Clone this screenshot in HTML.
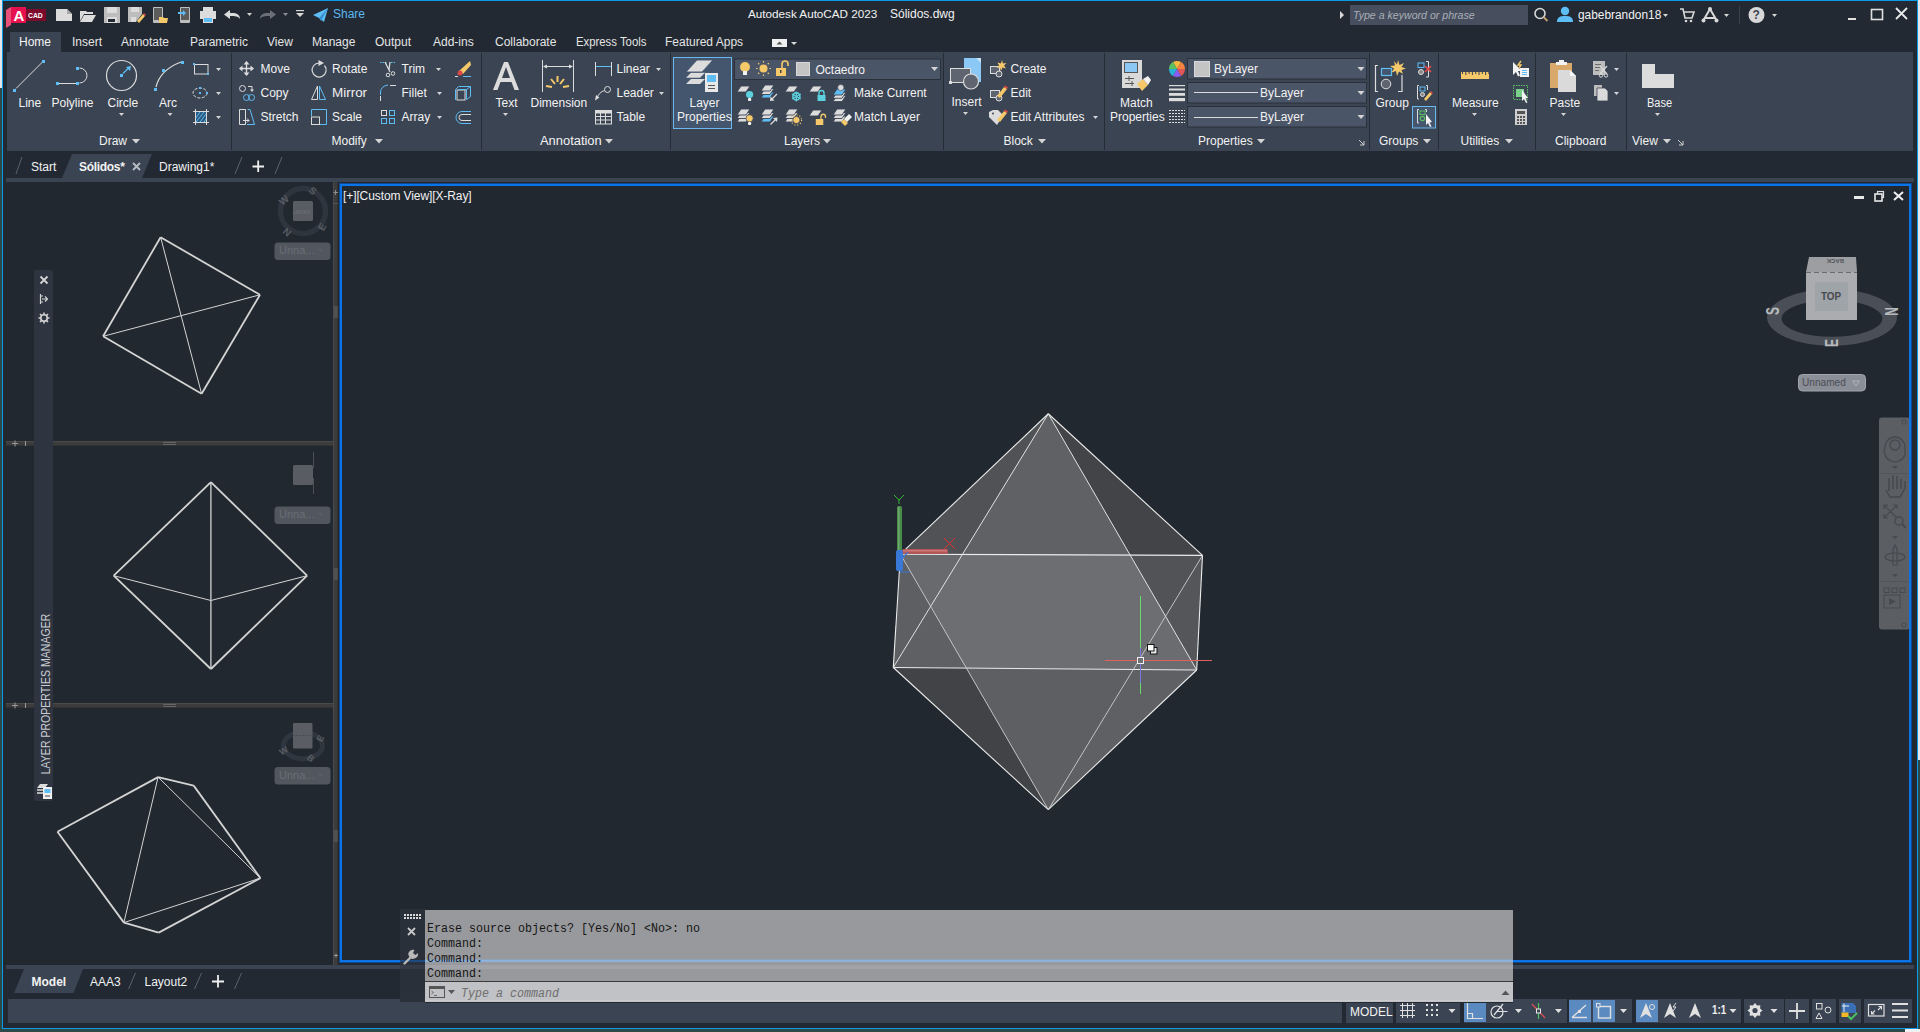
<!DOCTYPE html>
<html><head><meta charset="utf-8"><style>
html,body{margin:0;padding:0;width:1920px;height:1032px;overflow:hidden;background:#2d4a4a;position:relative;}
.t{position:absolute;white-space:pre;line-height:1;}
.r{position:absolute;}
.s{position:absolute;overflow:visible;}
</style></head><body>
<div class="r" style="left:0px;top:0px;width:2px;height:88px;background:#e4e6e9;"></div><div class="r" style="left:1918px;top:0px;width:2px;height:760px;background:#e4e6e9;"></div><div class="r" style="left:1905px;top:1029px;width:15px;height:3px;background:#f0f0f0;"></div><div class="r" style="left:2px;top:0px;width:1916px;height:1029px;background:#0b9ae4;"></div><div class="r" style="left:3px;top:1px;width:1914px;height:1027px;background:#222933;"></div><svg class="s" style="left:0px;top:0px;" width="1920" height="60" viewBox="0 0 1920 60"><polygon points="6,10 11,7 11,25 6,28" fill="#e8507a"/><rect x="11" y="7" width="15" height="16" fill="#e5114f"/><rect x="26" y="9" width="20" height="12" fill="#7c0a2a"/><path d="M56,9 H67 L72,14 V21 H56 Z" fill="#dcdcdc"/><path d="M67,9 V14 H72" fill="#a8a8a8"/><path d="M80,11 H86 L87,12 H93 V14 H84 L80,21 Z" fill="#dcdcdc"/><path d="M84,15 H96 L92,22 H80 Z" fill="#dcdcdc"/><path d="M104,7 H120 V23 H104 Z" fill="#bdbdbd"/><rect x="107" y="7" width="10" height="6" fill="#dcdcdc"/><rect x="107" y="17" width="10" height="6" fill="#dcdcdc"/><rect x="108" y="19" width="7" height="3" fill="#222933"/><path d="M128,7 H142 V14 L136,22 H128 Z" fill="#bdbdbd"/><rect x="131" y="7" width="8" height="5" fill="#dcdcdc"/><rect x="131" y="17" width="5" height="5" fill="#dcdcdc"/><path d="M137,21 L143,14 L145,16 L139,23 Z" fill="#f5c96a"/><path d="M143,14 L144,13 L146,15 L145,16 Z" fill="#e04848"/><rect x="153" y="7" width="10" height="16" rx="1" fill="#bdbdbd"/><rect x="154" y="8" width="8" height="12" fill="#5c5c5c"/><path d="M159,17 H163 L164,18 H168 L167,23 H159 Z" fill="#f5c96a"/><rect x="180" y="7" width="10" height="16" rx="1" fill="#bdbdbd"/><rect x="181" y="8" width="8" height="12" fill="#5c5c5c"/><path d="M178,12 H183 V10 L186,13 L183,16 V14 H178 Z" fill="#5fbdf5"/><rect x="203" y="7" width="10" height="5" fill="#dcdcdc"/><rect x="200" y="11" width="16" height="8" fill="#dcdcdc"/><rect x="203" y="17" width="10" height="6" fill="#dcdcdc"/><rect x="204" y="18" width="8" height="4" fill="#5fbdf5"/><path d="M224,14.5 L230,10 V13 C236,12.5 240,14 240,19 C238,16 235,16 230,16 V19 Z" fill="#dcdcdc"/><polygon points="247,13 252,13 249.5,16" fill="#d0d0d0"/><path d="M276,14.5 L270,10 V13 C264,12.5 260,14 260,19 C262,16 265,16 270,16 V19 Z" fill="#6a6f78"/><polygon points="283,13 288,13 285.5,16" fill="#8a8f98"/><rect x="296" y="10" width="8" height="1.2" fill="#d8d8d8"/><polygon points="296,13 304,13 300,17" fill="#d8d8d8"/><path d="M313,15 L328,8 L324,22 L319,18 Z" fill="#5fbdf5"/><path d="M319,18 L328,8 L321,21 Z" fill="#3a8fd0"/><polygon points="1340,11 1344,15 1340,19" fill="#d8d8d8"/><circle cx="1540" cy="13.5" r="5" fill="none" stroke="#d8d8d8" stroke-width="1.6"/><line x1="1543.5" y1="17" x2="1547.5" y2="21" stroke="#c9a070" stroke-width="1.8"/><circle cx="1565" cy="11" r="4.2" fill="#5fbdf5"/><path d="M1557,22 C1557,17 1560,16 1565,16 C1570,16 1573,17 1573,22 Z" fill="#5fbdf5"/><polygon points="1663,14 1668,14 1665.5,17" fill="#d8d8d8"/><path d="M1680,9 H1683 L1685,18 H1692 L1694,12 H1684" fill="none" stroke="#d8d8d8" stroke-width="1.6"/><circle cx="1686" cy="21" r="1.3" fill="#d8d8d8"/><circle cx="1691" cy="21" r="1.3" fill="#d8d8d8"/><path d="M1710,9 L1703,21 M1710,9 L1717,21 M1705,18 H1715" stroke="#d8d8d8" stroke-width="2" fill="none"/><circle cx="1710" cy="9" r="2" fill="#d8d8d8"/><circle cx="1703.5" cy="20.5" r="2" fill="#d8d8d8"/><circle cx="1716.5" cy="20.5" r="2" fill="#d8d8d8"/><polygon points="1724,14 1729,14 1726.5,17" fill="#d8d8d8"/><rect x="1739" y="6" width="1" height="18" fill="#3a404a"/><circle cx="1756.5" cy="15" r="8" fill="#d8d8d8"/><polygon points="1772,14 1777,14 1774.5,17" fill="#d8d8d8"/><rect x="1848" y="18" width="8" height="2" fill="#e0e0e0"/><rect x="1871.5" y="9.5" width="11" height="10" fill="none" stroke="#e0e0e0" stroke-width="1.6"/><path d="M1896,8 L1907,19 M1907,8 L1896,19" stroke="#e8e8e8" stroke-width="1.8"/><rect x="772" y="39" width="15" height="8" fill="#f0f0f0"/><polygon points="776.5,44.5 782.5,44.5 779.5,41.5" fill="#555"/><polygon points="791,42 797,42 794,45" fill="#d8d8d8"/></svg><div class="t" style="left:13.5px;top:7.80px;font-size:15px;color:#ffffff;font-weight:700;font-family:'Liberation Sans';">A</div><div class="t" style="left:28px;top:11.73px;font-size:8px;color:#ffffff;font-weight:700;font-family:'Liberation Sans';transform:scaleX(0.85);transform-origin:left">CAD</div><div class="t" style="left:1752.5px;top:9.34px;font-size:12px;color:#3b4453;font-weight:700;font-family:'Liberation Sans';">?</div><div class="r" style="left:1350px;top:5px;width:178px;height:20px;background:#474f5e;"></div><div class="t" style="left:1353px;top:10.23px;font-size:10.6px;color:#a9aeb6;font-weight:400;font-family:'Liberation Sans';font-style:italic">Type a keyword or phrase</div><div class="t" style="left:333px;top:8.34px;font-size:12px;color:#5cb8f2;font-weight:400;font-family:'Liberation Sans';">Share</div><div class="t" style="left:748px;top:8.00px;font-size:11.7px;color:#f2f2f2;font-weight:400;font-family:'Liberation Sans';">Autodesk AutoCAD 2023</div><div class="t" style="left:890px;top:7.74px;font-size:12px;color:#f2f2f2;font-weight:400;font-family:'Liberation Sans';">Sólidos.dwg</div><div class="t" style="left:1578px;top:8.84px;font-size:12px;color:#f2f2f2;font-weight:400;font-family:'Liberation Sans';transform:scaleX(0.99);transform-origin:left">gabebrandon18</div><div class="r" style="left:10px;top:32px;width:51px;height:20px;background:#3b4453;"></div><div class="t" style="left:19px;top:36.34px;font-size:12px;color:#f4f4f4;font-weight:400;font-family:'Liberation Sans';">Home</div><div class="t" style="left:72px;top:36.34px;font-size:12px;color:#e4e4e4;font-weight:400;font-family:'Liberation Sans';">Insert</div><div class="t" style="left:121px;top:36.34px;font-size:12px;color:#e4e4e4;font-weight:400;font-family:'Liberation Sans';">Annotate</div><div class="t" style="left:190px;top:36.34px;font-size:12px;color:#e4e4e4;font-weight:400;font-family:'Liberation Sans';">Parametric</div><div class="t" style="left:267px;top:36.34px;font-size:12px;color:#e4e4e4;font-weight:400;font-family:'Liberation Sans';">View</div><div class="t" style="left:312px;top:36.34px;font-size:12px;color:#e4e4e4;font-weight:400;font-family:'Liberation Sans';">Manage</div><div class="t" style="left:375px;top:36.34px;font-size:12px;color:#e4e4e4;font-weight:400;font-family:'Liberation Sans';">Output</div><div class="t" style="left:433px;top:36.34px;font-size:12px;color:#e4e4e4;font-weight:400;font-family:'Liberation Sans';">Add-ins</div><div class="t" style="left:495px;top:36.34px;font-size:12px;color:#e4e4e4;font-weight:400;font-family:'Liberation Sans';">Collaborate</div><div class="t" style="left:576px;top:36.34px;font-size:12px;color:#e4e4e4;font-weight:400;font-family:'Liberation Sans';transform:scaleX(0.945);transform-origin:left">Express Tools</div><div class="t" style="left:665px;top:36.34px;font-size:12px;color:#e4e4e4;font-weight:400;font-family:'Liberation Sans';">Featured Apps</div><div class="r" style="left:7px;top:52px;width:1906px;height:99px;background:#3b4453;"></div><svg class="s" style="left:0px;top:0px;" width="1920" height="160" viewBox="0 0 1920 160"><rect x="231" y="53" width="1" height="97" fill="#262c35"/><rect x="481" y="53" width="1" height="97" fill="#262c35"/><rect x="670" y="53" width="1" height="97" fill="#262c35"/><rect x="943" y="53" width="1" height="97" fill="#262c35"/><rect x="1104" y="53" width="1" height="97" fill="#262c35"/><rect x="1369" y="53" width="1" height="97" fill="#262c35"/><rect x="1438" y="53" width="1" height="97" fill="#262c35"/><rect x="1535" y="53" width="1" height="97" fill="#262c35"/><rect x="1626" y="53" width="1" height="97" fill="#262c35"/><line x1="16" y1="88.5" x2="42.5" y2="62" stroke="#dcdcdc" stroke-width="1"/><rect x="13" y="89" width="3" height="3" fill="#5fbdf5"/><rect x="42" y="60" width="3" height="3" fill="#5fbdf5"/><line x1="59" y1="83.5" x2="76" y2="83.5" stroke="#dcdcdc" stroke-width="1"/><path d="M79.5,68 A7.5,7.5 0 0 1 79.5,83" fill="none" stroke="#dcdcdc" stroke-width="1"/><rect x="56" y="82" width="3" height="3" fill="#5fbdf5"/><rect x="76" y="82" width="3" height="3" fill="#5fbdf5"/><rect x="76" y="67" width="3" height="3" fill="#5fbdf5"/><circle cx="121.5" cy="75.5" r="15" fill="none" stroke="#dcdcdc" stroke-width="1.2"/><rect x="120" y="74" width="3" height="3" fill="#5fbdf5"/><line x1="123" y1="73.5" x2="129" y2="67.5" stroke="#5fbdf5" stroke-width="1.2"/><polygon points="131,66 126,67 130,71" fill="#5fbdf5"/><polygon points="119.0,113 124.0,113 121.5,116" fill="#d4d4d4"/><path d="M156,87 Q160,70 181,62" fill="none" stroke="#dcdcdc" stroke-width="1.2"/><rect x="154" y="88" width="3" height="3" fill="#5fbdf5"/><rect x="162" y="69" width="3" height="3" fill="#5fbdf5"/><rect x="181" y="61" width="3" height="3" fill="#5fbdf5"/><polygon points="167.5,113 172.5,113 170,116" fill="#d4d4d4"/><rect x="194.5" y="64.5" width="13.5" height="9.5" fill="none" stroke="#dcdcdc" stroke-width="1"/><rect x="193" y="63" width="2" height="2" fill="#5fbdf5"/><rect x="207" y="73" width="2" height="2" fill="#5fbdf5"/><polygon points="216.0,68 221.0,68 218.5,71" fill="#d4d4d4"/><ellipse cx="200" cy="93" rx="7" ry="5" fill="none" stroke="#dcdcdc" stroke-width="1" stroke-dasharray="3,1.5"/><rect x="199" y="87" width="2" height="2" fill="#5fbdf5"/><rect x="199" y="92" width="2" height="2" fill="#5fbdf5"/><rect x="206" y="92" width="2" height="2" fill="#5fbdf5"/><polygon points="216.0,92 221.0,92 218.5,95" fill="#d4d4d4"/><path d="M193,111.5 H209 M193,122.5 H209 M195.5,109 V125 M206.5,109 V125" stroke="#dcdcdc" stroke-width="1"/><rect x="196" y="112" width="10" height="10" fill="#2d5a80"/><path d="M196,118 L200,112 M196,122 L204,112 M200,122 L206,114 M204,122 L206,119" stroke="#5fbdf5" stroke-width="1"/><polygon points="216.0,116 221.0,116 218.5,119" fill="#d4d4d4"/><polygon points="132.0,139 140.0,139 136,143.5" fill="#d4d4d4"/><path d="M246.5,62 V75 M240,68.5 H253" stroke="#dcdcdc" stroke-width="1.4"/><polygon points="246.5,61 243.5,64.5 249.5,64.5" fill="#dcdcdc"/><polygon points="246.5,76 243.5,72.5 249.5,72.5" fill="#dcdcdc"/><polygon points="239,68.5 242.5,65.5 242.5,71.5" fill="#dcdcdc"/><polygon points="254,68.5 250.5,65.5 250.5,71.5" fill="#dcdcdc"/><circle cx="242.5" cy="88.5" r="3" fill="none" stroke="#dcdcdc" stroke-width="1"/><path d="M248,86.5 H252 V90" fill="none" stroke="#dcdcdc" stroke-width="1"/><polygon points="250,89.5 254,89.5 252,92" fill="#dcdcdc"/><circle cx="246.5" cy="97.5" r="3" fill="none" stroke="#5fbdf5" stroke-width="1"/><circle cx="251.5" cy="97.5" r="3" fill="none" stroke="#5fbdf5" stroke-width="1"/><path d="M245.5,109.5 H239.5 V124.5 H245.5 V109.5" fill="none" stroke="#dcdcdc" stroke-width="1"/><path d="M243,120.5 H249 M247,118.5 L249,120.5 L247,122.5" stroke="#dcdcdc" stroke-width="1" fill="none"/><path d="M247.5,109.5 H250 L254.5,124.5 H247" fill="none" stroke="#5fbdf5" stroke-width="1"/><path d="M319,63 A7,7 0 1 0 324.5,65.5" fill="none" stroke="#dcdcdc" stroke-width="1.2"/><polygon points="318.5,60 324,63 318.5,66" fill="#dcdcdc"/><polygon points="311.5,99.5 317.5,99.5 317.5,86" fill="none" stroke="#dcdcdc" stroke-width="1"/><polygon points="319.5,99.5 325.5,99.5 319.5,86" fill="none" stroke="#5fbdf5" stroke-width="1"/><path d="M311.5,116 V109.5 H326.5 V124.5 H320" fill="none" stroke="#5fbdf5" stroke-width="1"/><rect x="311.5" y="117" width="8" height="7.5" fill="none" stroke="#dcdcdc" stroke-width="1"/><path d="M380,62.5 H387 M391,62.5 H396" stroke="#5fbdf5" stroke-width="1" stroke-dasharray="1.5,1"/><path d="M385,62 L390,72 M390,62 L389,70" stroke="#dcdcdc" stroke-width="1.3"/><circle cx="388" cy="75" r="1.8" fill="none" stroke="#dcdcdc" stroke-width="1"/><circle cx="393" cy="73.5" r="1.8" fill="none" stroke="#dcdcdc" stroke-width="1"/><polygon points="436.0,68 441.0,68 438.5,71" fill="#d4d4d4"/><path d="M380.5,95 V92 Q381,86 388,85" fill="none" stroke="#5fbdf5" stroke-width="1"/><path d="M390,85.5 H396 M380.5,96 V101" stroke="#dcdcdc" stroke-width="1"/><polygon points="437.0,92 442.0,92 439.5,95" fill="#d4d4d4"/><rect x="381.5" y="110.5" width="5" height="5" fill="none" stroke="#dcdcdc" stroke-width="1"/><rect x="389.5" y="110.5" width="5" height="5" fill="none" stroke="#5fbdf5" stroke-width="1"/><rect x="381.5" y="118.5" width="5" height="5" fill="none" stroke="#5fbdf5" stroke-width="1"/><rect x="389.5" y="118.5" width="5" height="5" fill="none" stroke="#5fbdf5" stroke-width="1"/><polygon points="437.0,116 442.0,116 439.5,119" fill="#d4d4d4"/><polygon points="459,71 470,61 471,65 463,74" fill="#f5c96a"/><circle cx="460" cy="73" r="2.5" fill="#e04848"/><path d="M455,76.5 H458 M463,76.5 H471" stroke="#5fbdf5" stroke-width="1"/><path d="M455,76.5 H458" stroke="#dcdcdc" stroke-width="1"/><rect x="457" y="90" width="8" height="10" fill="none" stroke="#dcdcdc" stroke-width="1"/><path d="M455.5,100 V89.5 L458.5,86.5 H470.5 V96.5 L466.5,99.5 M466.5,89.5 L470.5,86.5 M466.5,89.5 V99.5 M458.5,89.5 H466.5" fill="none" stroke="#5fbdf5" stroke-width="1"/><path d="M471,111.5 H462 A6,6 0 0 0 462,123.5 H471" fill="none" stroke="#5fbdf5" stroke-width="1"/><path d="M471,114.5 H462 A3,3 0 0 0 462,120.5 H471" fill="none" stroke="#dcdcdc" stroke-width="1"/><polygon points="375.0,139 383.0,139 379,143.5" fill="#d4d4d4"/><path d="M493,90 L504,62 H508 L519,90 H514.5 L511.5,82 H500.5 L497.5,90 Z M502,78 H510 L506,67 Z" fill="#dcdcdc" fill-rule="evenodd"/><polygon points="503.0,113 508.0,113 505.5,116" fill="#d4d4d4"/><path d="M542.5,60 V92 M573.5,60 V92 M544,66.5 H572" stroke="#dcdcdc" stroke-width="1"/><polygon points="543,66.5 547,64.5 547,68.5" fill="#dcdcdc"/><polygon points="573,66.5 569,64.5 569,68.5" fill="#dcdcdc"/><path d="M557.5,76 V82 M551,79 L555,84 M564,79 L560,84 M546,86 L552,87 M569,86 L563,87" stroke="#f5c96a" stroke-width="2"/><path d="M595.5,62 V76 M611.5,62 V76" stroke="#dcdcdc" stroke-width="1"/><path d="M596,66.5 H611" stroke="#5fbdf5" stroke-width="1"/><polygon points="656.0,68 661.0,68 658.5,71" fill="#d4d4d4"/><circle cx="607.5" cy="89.5" r="3" fill="none" stroke="#dcdcdc" stroke-width="1"/><path d="M604.5,90.5 Q599,92 596.5,99" fill="none" stroke="#dcdcdc" stroke-width="1"/><polygon points="595,100.5 596,95 599.5,97.5" fill="#dcdcdc"/><polygon points="659.0,92 664.0,92 661.5,95" fill="#d4d4d4"/><rect x="595.5" y="110.5" width="16" height="13.5" fill="none" stroke="#dcdcdc" stroke-width="1"/><rect x="596" y="111" width="15" height="2.5" fill="#dcdcdc"/><path d="M596,116.5 H611 M596,120 H611 M600.5,113 V124 M605.5,113 V124" stroke="#dcdcdc" stroke-width="1"/><polygon points="605.0,139 613.0,139 609,143.5" fill="#d4d4d4"/><rect x="673.5" y="57.5" width="58" height="71" fill="#44566d" stroke="#6ab8ee" stroke-width="1"/><polygon points="691,79 705,79 700,84 686,84" fill="#dcdcdc"/><polygon points="691,72.8 705,72.8 700,77.8 686,77.8" fill="#dcdcdc"/><polygon points="697,60 713,60 702,72 686,72" fill="#dcdcdc" stroke="#44566d" stroke-width="0.9"/><rect x="705" y="73" width="13" height="19" fill="#e8e8e8"/><rect x="707" y="75" width="9" height="7" fill="#5fbdf5"/><path d="M708,85.5 H715 M708,88.5 H715" stroke="#555" stroke-width="1"/><rect x="734.5" y="59" width="206" height="20.5" fill="#4b5568" stroke="#2a313b" stroke-width="1"/><circle cx="745" cy="67" r="5" fill="#f5c96a"/><rect x="743" y="71" width="4" height="4" fill="#f2f2f2"/><circle cx="763.5" cy="68.5" r="4" fill="#f5c96a"/><line x1="769.5" y1="68.5" x2="771.0" y2="68.5" stroke="#f5c96a" stroke-width="1.2"/><line x1="767.7426435016754" y1="72.74263787256135" x2="768.8033043770942" y2="73.80329734070168" stroke="#f5c96a" stroke-width="1.2"/><line x1="763.5000079607694" y1="74.49999999999471" x2="763.5000099509617" y2="75.9999999999934" stroke="#f5c96a" stroke-width="1.2"/><line x1="759.2573677565601" y1="72.7426491307819" x2="758.1967096957002" y2="73.80331141347737" stroke="#f5c96a" stroke-width="1.2"/><line x1="757.5000000000211" y1="68.50001592153876" x2="756.0000000000264" y2="68.50001990192345" stroke="#f5c96a" stroke-width="1.2"/><line x1="759.257345240119" y1="64.25737338568908" x2="758.1966815501488" y2="63.196716732111355" stroke="#f5c96a" stroke-width="1.2"/><line x1="763.4999761176919" y1="62.50000000004753" x2="763.4999701471148" y2="61.000000000059416" stroke="#f5c96a" stroke-width="1.2"/><line x1="767.7426209851745" y1="64.25733961102742" x2="768.8032762314681" y2="63.196674513784274" stroke="#f5c96a" stroke-width="1.2"/><rect x="776" y="68" width="10" height="8" fill="#f5c96a"/><path d="M782,68 V64 A3,3 0 0 1 788,64 V66" fill="none" stroke="#f5c96a" stroke-width="1.6"/><rect x="780" y="70" width="1.5" height="3" fill="#3b4453"/><rect x="796.5" y="62.5" width="13" height="13" fill="#c4c4c4" stroke="#d8d8d8" stroke-width="1"/><polygon points="931.0,67 938.0,67 934.5,71" fill="#d4d4d4"/><polygon points="741,86 750,86 746,92 737,92" fill="#dcdcdc" stroke="#3b4453" stroke-width="0.9"/><circle cx="749.6" cy="94.5" r="3.6" fill="#5cd0dc"/><rect x="748" y="98" width="3.2" height="3" rx="1" fill="#f2f2f2"/><polygon points="765,92.0 774,92.0 770,98.0 761,98.0" fill="#5fbdf5" stroke="#3b4453" stroke-width="0.9"/><polygon points="765,88.5 774,88.5 770,94.5 761,94.5" fill="#dcdcdc" stroke="#3b4453" stroke-width="0.9"/><polygon points="765,85.0 774,85.0 770,91.0 761,91.0" fill="#dcdcdc" stroke="#3b4453" stroke-width="0.9"/><path d="M777,94 L771,100" stroke="#dcdcdc" stroke-width="1.2"/><polygon points="770,101 770.5,96.5 774.5,100.5" fill="#dcdcdc"/><polygon points="789,86 798,86 794,92 785,92" fill="#dcdcdc" stroke="#3b4453" stroke-width="0.9"/><circle cx="796.4" cy="96.4" r="3.5" fill="none" stroke="#5cd0dc" stroke-width="1.6"/><path d="M796.4,91.5 V101.5 M792,94 L800.8,99 M800.8,94 L792,99" stroke="#5cd0dc" stroke-width="1.2"/><polygon points="813,86 822,86 818,92 809,92" fill="#dcdcdc" stroke="#3b4453" stroke-width="0.9"/><rect x="817.5" y="95" width="8" height="6" fill="#5cd0dc"/><path d="M819,95 V93 A2.5,2.5 0 0 1 824,93 V95" fill="none" stroke="#5cd0dc" stroke-width="1.4"/><polygon points="837,95.6 846,95.6 842,101.6 833,101.6" fill="#dcdcdc" stroke="#3b4453" stroke-width="0.9"/><polygon points="837,92.3 846,92.3 842,98.3 833,98.3" fill="#dcdcdc" stroke="#3b4453" stroke-width="0.9"/><polygon points="837,89.0 846,89.0 842,95.0 833,95.0" fill="#5fbdf5" stroke="#3b4453" stroke-width="0.9"/><circle cx="840.8" cy="87.6" r="3.1" fill="#dcdcdc" stroke="#3b4453" stroke-width="0.6"/><polygon points="741,116.0 750,116.0 746,122.0 737,122.0" fill="#dcdcdc" stroke="#3b4453" stroke-width="0.9"/><polygon points="741,112.5 750,112.5 746,118.5 737,118.5" fill="#dcdcdc" stroke="#3b4453" stroke-width="0.9"/><polygon points="741,109.0 750,109.0 746,115.0 737,115.0" fill="#dcdcdc" stroke="#3b4453" stroke-width="0.9"/><circle cx="749.6" cy="118.3" r="3.6" fill="#f5c96a" stroke="#3b4453" stroke-width="0.7"/><rect x="748" y="122" width="3.2" height="3" rx="1" fill="#f2f2f2"/><polygon points="765,116.0 774,116.0 770,122.0 761,122.0" fill="#5fbdf5" stroke="#3b4453" stroke-width="0.9"/><polygon points="765,112.5 774,112.5 770,118.5 761,118.5" fill="#dcdcdc" stroke="#3b4453" stroke-width="0.9"/><polygon points="765,109.0 774,109.0 770,115.0 761,115.0" fill="#dcdcdc" stroke="#3b4453" stroke-width="0.9"/><path d="M770.5,124.5 L776.5,118.5" stroke="#dcdcdc" stroke-width="1.2"/><polygon points="777.5,117.5 777,122 773,118" fill="#dcdcdc"/><polygon points="789,116.0 798,116.0 794,122.0 785,122.0" fill="#dcdcdc" stroke="#3b4453" stroke-width="0.9"/><polygon points="789,112.5 798,112.5 794,118.5 785,118.5" fill="#dcdcdc" stroke="#3b4453" stroke-width="0.9"/><polygon points="789,109.0 798,109.0 794,115.0 785,115.0" fill="#dcdcdc" stroke="#3b4453" stroke-width="0.9"/><circle cx="796.4" cy="120" r="3.6" fill="#f5c96a" stroke="#3b4453" stroke-width="0.8"/><circle cx="796.4" cy="120" r="5.2" fill="none" stroke="#f5c96a" stroke-width="1.1" stroke-dasharray="1.1,1.9"/><polygon points="813,110 822,110 818,116 809,116" fill="#dcdcdc" stroke="#3b4453" stroke-width="0.9"/><rect x="815.8" y="119" width="7.5" height="6" fill="#f5c96a"/><path d="M821,119 V116.5 A2.2,2.2 0 0 1 825.5,116.5 V118" fill="none" stroke="#f5c96a" stroke-width="1.3"/><polygon points="837,116.0 846,116.0 842,122.0 833,122.0" fill="#dcdcdc" stroke="#3b4453" stroke-width="0.9"/><polygon points="837,112.5 846,112.5 842,118.5 833,118.5" fill="#dcdcdc" stroke="#3b4453" stroke-width="0.9"/><polygon points="837,109.0 846,109.0 842,115.0 833,115.0" fill="#dcdcdc" stroke="#3b4453" stroke-width="0.9"/><path d="M841,122 L845,126 L848,123 L844,119 Z" fill="#f5c96a"/><path d="M844,119 L849,114 L852,117 L847,122 Z" fill="#f2f2f2"/><polygon points="823.0,139 831.0,139 827,143.5" fill="#d4d4d4"/><path d="M964,58 H978 L981,61 V82 H964 Z" fill="#8cc8f5"/><polygon points="976,58 981,58 981,63" fill="#c8e4f8"/><rect x="950.5" y="68.5" width="20" height="14" fill="#5f6570" stroke="#dcdcdc" stroke-width="1"/><circle cx="971" cy="81.5" r="7.5" fill="#5f6570" stroke="#dcdcdc" stroke-width="1.2"/><rect x="949" y="81" width="3" height="3" fill="#dcdcdc"/><polygon points="963.0,112 968.0,112 965.5,115" fill="#d4d4d4"/><rect x="990.5" y="66.5" width="9" height="7" fill="#5f6570" stroke="#dcdcdc" stroke-width="1"/><circle cx="999" cy="74" r="3" fill="#5f6570" stroke="#dcdcdc" stroke-width="1"/><path d="M1002,60 L1003,63.5 L1006.5,63 L1004,65.5 L1006,68.5 L1002.5,67.5 L1001,71 L1000,67.5 L996.5,68 L999,65.5 L997.5,62.5 L1001,63.5 Z" fill="#f5c96a"/><rect x="990.5" y="90.5" width="9" height="7" fill="#5f6570" stroke="#dcdcdc" stroke-width="1"/><circle cx="999" cy="98" r="3" fill="#5f6570" stroke="#dcdcdc" stroke-width="1"/><path d="M997,96 L1004,87 L1007,89 L1000,98 Z" fill="#f5c96a"/><path d="M1004,87 L1005,85.5 L1008,87.5 L1007,89 Z" fill="#e04848"/><path d="M989,112 L993,110 H998 L1003,115 L997,125 L989,117 Z" fill="#dcdcdc"/><circle cx="993" cy="113.5" r="1" fill="#3b4453"/><path d="M997,120 L1004,111 L1007,113 L1000,122 Z" fill="#f5c96a"/><path d="M1004,111 L1005,109.5 L1008,111.5 L1007,113 Z" fill="#e04848"/><polygon points="1093.0,116 1098.0,116 1095.5,119" fill="#d4d4d4"/><polygon points="1038.0,139 1046.0,139 1042,143.5" fill="#d4d4d4"/><rect x="1122" y="60" width="20" height="28" fill="#d9d9d9"/><rect x="1124.5" y="62.5" width="13" height="10" fill="#8cc8f5" stroke="#555" stroke-width="1"/><path d="M1125,78.5 H1134 M1125,83.5 H1134 M1129,76 V81 M1132,81 V86" stroke="#555" stroke-width="1"/><path d="M1137,84 L1143,79 L1148,85 L1142,91 Z" fill="#f5c96a"/><path d="M1143,79 L1148,76 L1151,80 L1148,85 Z" fill="#f2f2f2"/><path d="M1177,69 L1173.00,62.07 A8,8 0 0 1 1181.00,62.07 Z" fill="#f5b83d"/><path d="M1177,69 L1181.00,62.07 A8,8 0 0 1 1185.00,69.00 Z" fill="#f5823d"/><path d="M1177,69 L1185.00,69.00 A8,8 0 0 1 1181.00,75.93 Z" fill="#e05555"/><path d="M1177,69 L1181.00,75.93 A8,8 0 0 1 1173.00,75.93 Z" fill="#8a5cf0"/><path d="M1177,69 L1173.00,75.93 A8,8 0 0 1 1169.00,69.00 Z" fill="#28b0d8"/><path d="M1177,69 L1169.00,69.00 A8,8 0 0 1 1173.00,62.07 Z" fill="#5cc060"/><rect x="1187.5" y="58.5" width="179" height="20.5" fill="#4b5568" stroke="#2a313b" stroke-width="1"/><polygon points="1357.5,67.0 1364.5,67.0 1361,71.0" fill="#d4d4d4"/><rect x="1187.5" y="82.5" width="179" height="20.5" fill="#4b5568" stroke="#2a313b" stroke-width="1"/><polygon points="1357.5,91.0 1364.5,91.0 1361,95.0" fill="#d4d4d4"/><rect x="1187.5" y="106.5" width="179" height="20.5" fill="#4b5568" stroke="#2a313b" stroke-width="1"/><polygon points="1357.5,115.0 1364.5,115.0 1361,119.0" fill="#d4d4d4"/><rect x="1194.5" y="61.5" width="15" height="15" fill="#c4c4c4" stroke="#d8d8d8" stroke-width="1"/><path d="M1194,92.5 H1258 M1194,117.5 H1258" stroke="#dcdcdc" stroke-width="1"/><rect x="1169" y="85" width="16" height="1.2" fill="#dcdcdc"/><rect x="1169" y="88.5" width="16" height="2" fill="#dcdcdc"/><rect x="1169" y="93" width="16" height="2.8" fill="#dcdcdc"/><rect x="1169" y="98" width="16" height="3.2" fill="#dcdcdc"/><path d="M1169,110.5 H1185 M1169,113.5 H1185 M1169,116.5 H1185 M1169,119.5 H1185 M1169,122.5 H1185" stroke="#dcdcdc" stroke-width="1" stroke-dasharray="2,1"/><polygon points="1257.0,139 1265.0,139 1261,143.5" fill="#d4d4d4"/><path d="M1359,140 L1364,145 M1364,141 V145 H1360" stroke="#d0d0d0" stroke-width="1" fill="none"/><path d="M1378,65.5 H1375.5 V91.5 H1378 M1402,75 V91.5 H1398" fill="none" stroke="#dcdcdc" stroke-width="1.2"/><rect x="1381.5" y="68.5" width="10" height="7" fill="#44566d" stroke="#5fbdf5" stroke-width="1.2"/><circle cx="1386" cy="84" r="4.8" fill="#5f6570" stroke="#dcdcdc" stroke-width="1"/><path d="M1398,60 L1399.5,65 L1404,63 L1401.5,67 L1406,68.5 L1401.5,70 L1403,74 L1399,71.5 L1397,76 L1396,71 L1391.5,72.5 L1394,68.5 L1390,66 L1395,65.5 L1394,61 L1397,64.5 Z" fill="#f5c96a"/><path d="M1426,61.5 H1428.5 V77 H1426" fill="none" stroke="#dcdcdc" stroke-width="1"/><rect x="1418" y="63" width="6" height="4.5" fill="none" stroke="#5fbdf5" stroke-width="1"/><circle cx="1421" cy="72" r="2.5" fill="#888" stroke="#dcdcdc" stroke-width="1"/><path d="M1425,66 L1431,72 M1431,66 L1425,72" stroke="#e84848" stroke-width="1.6"/><path d="M1419,85.5 H1417.5 V99 H1419 M1426,85.5 H1427.5 V90" fill="none" stroke="#dcdcdc" stroke-width="1"/><rect x="1420" y="87" width="5" height="4" fill="none" stroke="#5fbdf5" stroke-width="1"/><circle cx="1422.5" cy="94.5" r="2" fill="#888" stroke="#dcdcdc" stroke-width="1"/><path d="M1424,99 L1430,92 L1432,94 L1426,101 Z" fill="#f5c96a"/><path d="M1430,92 L1431,91 L1433,93 L1432,94 Z" fill="#e84848"/><rect x="1412.5" y="106.5" width="23" height="21.5" fill="#44566d" stroke="#6ab8ee" stroke-width="1"/><path d="M1419,109.5 H1417.5 V123 H1419 M1425,109.5 H1426.5 V112" fill="none" stroke="#dcdcdc" stroke-width="1"/><rect x="1420" y="111" width="5" height="3.5" fill="none" stroke="#5cc060" stroke-width="1"/><circle cx="1422.5" cy="118.5" r="2.2" fill="none" stroke="#5cc060" stroke-width="1.2"/><polygon points="1426,114 1426,125 1428,123 1430,127 1431.5,126.5 1429.5,122.5 1432,122" fill="#f2f2f2"/><polygon points="1423.0,139 1431.0,139 1427,143.5" fill="#d4d4d4"/><rect x="1461" y="72" width="28" height="7" fill="#f5c96a"/><rect x="1462.0" y="72" width="1" height="2" fill="#3b4453"/><rect x="1465.3" y="72" width="1" height="3" fill="#3b4453"/><rect x="1468.6" y="72" width="1" height="2" fill="#3b4453"/><rect x="1471.9" y="72" width="1" height="3" fill="#3b4453"/><rect x="1475.2" y="72" width="1" height="2" fill="#3b4453"/><rect x="1478.5" y="72" width="1" height="3" fill="#3b4453"/><rect x="1481.8" y="72" width="1" height="2" fill="#3b4453"/><rect x="1485.1" y="72" width="1" height="3" fill="#3b4453"/><rect x="1488.4" y="72" width="1" height="2" fill="#3b4453"/><polygon points="1472.0,113 1477.0,113 1474.5,116" fill="#d4d4d4"/><polygon points="1513,62 1513,75 1516,72 1518,76.5 1520,75.5 1518,71 1522,71" fill="#f2f2f2"/><rect x="1520" y="68" width="9" height="9" fill="#f2f2f2"/><path d="M1522,70.5 H1527 M1522,72.5 H1527 M1522,74.5 H1527" stroke="#5fbdf5" stroke-width="1"/><path d="M1521,61 L1518,65 L1521,65 L1519,68" stroke="#f5c96a" stroke-width="1.4" fill="none"/><rect x="1513.5" y="85.5" width="14" height="14" fill="none" stroke="#5cc060" stroke-width="1" stroke-dasharray="1.5,1"/><path d="M1516,89 H1524 V97 H1516 Z" fill="#7ad08a"/><polygon points="1522,90 1522,101 1524,99 1526,103 1527.5,102.5 1525.5,98.5 1528,98" fill="#f2f2f2"/><rect x="1515" y="109" width="12" height="16" fill="#cfcfcf"/><rect x="1517" y="111" width="8" height="3" fill="#555"/><rect x="1517" y="116" width="2" height="2" fill="#555"/><rect x="1517" y="119" width="2" height="2" fill="#555"/><rect x="1517" y="122" width="2" height="2" fill="#555"/><rect x="1520" y="116" width="2" height="2" fill="#555"/><rect x="1520" y="119" width="2" height="2" fill="#555"/><rect x="1520" y="122" width="2" height="2" fill="#555"/><rect x="1523" y="116" width="2" height="2" fill="#555"/><rect x="1523" y="119" width="2" height="2" fill="#555"/><rect x="1523" y="122" width="2" height="2" fill="#555"/><polygon points="1505.0,139 1513.0,139 1509,143.5" fill="#d4d4d4"/><rect x="1550" y="63" width="22" height="25" fill="#d8a96a"/><rect x="1559" y="60" width="5" height="3" fill="#f2f2f2"/><rect x="1556" y="62" width="11" height="3" fill="#f2f2f2"/><path d="M1558,70 H1570 L1576,76 V92 H1558 Z" fill="#dadada"/><polygon points="1570,70 1576,76 1570,76" fill="#f5f5f5"/><polygon points="1561.0,113 1566.0,113 1563.5,116" fill="#d4d4d4"/><rect x="1593" y="61" width="12" height="14" fill="#bdbdbd"/><path d="M1595,64.5 H1601 M1595,67.5 H1601 M1595,70.5 H1599" stroke="#6a6a6a" stroke-width="1"/><path d="M1600,66 L1607,74 M1607,66 L1600,74" stroke="#dcdcdc" stroke-width="1.2"/><circle cx="1601" cy="75.5" r="1.7" fill="none" stroke="#dcdcdc" stroke-width="1"/><circle cx="1606" cy="75.5" r="1.7" fill="none" stroke="#dcdcdc" stroke-width="1"/><polygon points="1614.0,68 1619.0,68 1616.5,71" fill="#d4d4d4"/><rect x="1594" y="85" width="8" height="11" fill="#bdbdbd"/><path d="M1597,88 H1605 L1608,91 V101 H1597 Z" fill="#dadada" stroke="#3b4453" stroke-width="0.8"/><polygon points="1614.0,92 1619.0,92 1616.5,95" fill="#d4d4d4"/><path d="M1642,64 H1655 V74 H1674 V88 H1642 Z" fill="#dcdcdc"/><polygon points="1655.0,113 1660.0,113 1657.5,116" fill="#d4d4d4"/><polygon points="1663.0,139 1671.0,139 1667,143.5" fill="#d4d4d4"/><path d="M1678,140 L1683,145 M1683,141 V145 H1679" stroke="#d0d0d0" stroke-width="1" fill="none"/></svg><div class="t" style="left:18.5px;top:96.84px;font-size:12px;color:#f2f2f2;font-weight:400;font-family:'Liberation Sans';">Line</div><div class="t" style="left:51.5px;top:96.84px;font-size:12px;color:#f2f2f2;font-weight:400;font-family:'Liberation Sans';">Polyline</div><div class="t" style="left:107.5px;top:96.84px;font-size:12px;color:#f2f2f2;font-weight:400;font-family:'Liberation Sans';">Circle</div><div class="t" style="left:159px;top:96.84px;font-size:12px;color:#f2f2f2;font-weight:400;font-family:'Liberation Sans';">Arc</div><div class="t" style="left:99px;top:134.84px;font-size:12px;color:#f2f2f2;font-weight:400;font-family:'Liberation Sans';">Draw</div><div class="t" style="left:331.5px;top:134.84px;font-size:12px;color:#f2f2f2;font-weight:400;font-family:'Liberation Sans';">Modify</div><div class="t" style="left:539.5px;top:134.84px;font-size:12px;color:#f2f2f2;font-weight:400;font-family:'Liberation Sans';transform:scaleX(1.075);transform-origin:left">Annotation</div><div class="t" style="left:784px;top:134.84px;font-size:12px;color:#f2f2f2;font-weight:400;font-family:'Liberation Sans';">Layers</div><div class="t" style="left:1003.5px;top:134.84px;font-size:12px;color:#f2f2f2;font-weight:400;font-family:'Liberation Sans';">Block</div><div class="t" style="left:1198px;top:134.84px;font-size:12px;color:#f2f2f2;font-weight:400;font-family:'Liberation Sans';">Properties</div><div class="t" style="left:1379px;top:134.84px;font-size:12px;color:#f2f2f2;font-weight:400;font-family:'Liberation Sans';">Groups</div><div class="t" style="left:1460.5px;top:134.84px;font-size:12px;color:#f2f2f2;font-weight:400;font-family:'Liberation Sans';">Utilities</div><div class="t" style="left:1555px;top:134.84px;font-size:12px;color:#f2f2f2;font-weight:400;font-family:'Liberation Sans';">Clipboard</div><div class="t" style="left:1632px;top:134.84px;font-size:12px;color:#f2f2f2;font-weight:400;font-family:'Liberation Sans';">View</div><div class="t" style="left:260.5px;top:62.84px;font-size:12px;color:#f2f2f2;font-weight:400;font-family:'Liberation Sans';">Move</div><div class="t" style="left:260.5px;top:86.84px;font-size:12px;color:#f2f2f2;font-weight:400;font-family:'Liberation Sans';">Copy</div><div class="t" style="left:260.5px;top:110.84px;font-size:12px;color:#f2f2f2;font-weight:400;font-family:'Liberation Sans';">Stretch</div><div class="t" style="left:332px;top:62.84px;font-size:12px;color:#f2f2f2;font-weight:400;font-family:'Liberation Sans';">Rotate</div><div class="t" style="left:332px;top:86.84px;font-size:12px;color:#f2f2f2;font-weight:400;font-family:'Liberation Sans';transform:scaleX(1.12);transform-origin:left">Mirror</div><div class="t" style="left:332px;top:110.84px;font-size:12px;color:#f2f2f2;font-weight:400;font-family:'Liberation Sans';">Scale</div><div class="t" style="left:401.5px;top:62.84px;font-size:12px;color:#f2f2f2;font-weight:400;font-family:'Liberation Sans';">Trim</div><div class="t" style="left:401.5px;top:86.84px;font-size:12px;color:#f2f2f2;font-weight:400;font-family:'Liberation Sans';">Fillet</div><div class="t" style="left:401.5px;top:110.84px;font-size:12px;color:#f2f2f2;font-weight:400;font-family:'Liberation Sans';">Array</div><div class="t" style="left:495.5px;top:96.84px;font-size:12px;color:#f2f2f2;font-weight:400;font-family:'Liberation Sans';">Text</div><div class="t" style="left:530.5px;top:96.84px;font-size:12px;color:#f2f2f2;font-weight:400;font-family:'Liberation Sans';">Dimension</div><div class="t" style="left:616.5px;top:62.84px;font-size:12px;color:#f2f2f2;font-weight:400;font-family:'Liberation Sans';">Linear</div><div class="t" style="left:616.5px;top:86.84px;font-size:12px;color:#f2f2f2;font-weight:400;font-family:'Liberation Sans';">Leader</div><div class="t" style="left:616.5px;top:110.84px;font-size:12px;color:#f2f2f2;font-weight:400;font-family:'Liberation Sans';">Table</div><div class="t" style="left:689.5px;top:96.84px;font-size:12px;color:#f2f2f2;font-weight:400;font-family:'Liberation Sans';">Layer</div><div class="t" style="left:677px;top:111.34px;font-size:12px;color:#f2f2f2;font-weight:400;font-family:'Liberation Sans';">Properties</div><div class="t" style="left:815.5px;top:63.84px;font-size:12px;color:#f2f2f2;font-weight:400;font-family:'Liberation Sans';">Octaedro</div><div class="t" style="left:854px;top:86.84px;font-size:12px;color:#f2f2f2;font-weight:400;font-family:'Liberation Sans';">Make Current</div><div class="t" style="left:854px;top:110.84px;font-size:12px;color:#f2f2f2;font-weight:400;font-family:'Liberation Sans';">Match Layer</div><div class="t" style="left:951.5px;top:95.84px;font-size:12px;color:#f2f2f2;font-weight:400;font-family:'Liberation Sans';">Insert</div><div class="t" style="left:1010.5px;top:62.84px;font-size:12px;color:#f2f2f2;font-weight:400;font-family:'Liberation Sans';">Create</div><div class="t" style="left:1010.5px;top:86.84px;font-size:12px;color:#f2f2f2;font-weight:400;font-family:'Liberation Sans';">Edit</div><div class="t" style="left:1010.5px;top:110.84px;font-size:12px;color:#f2f2f2;font-weight:400;font-family:'Liberation Sans';">Edit Attributes</div><div class="t" style="left:1120px;top:96.84px;font-size:12px;color:#f2f2f2;font-weight:400;font-family:'Liberation Sans';">Match</div><div class="t" style="left:1110px;top:111.34px;font-size:12px;color:#f2f2f2;font-weight:400;font-family:'Liberation Sans';">Properties</div><div class="t" style="left:1214px;top:62.84px;font-size:12px;color:#f2f2f2;font-weight:400;font-family:'Liberation Sans';">ByLayer</div><div class="t" style="left:1260px;top:86.84px;font-size:12px;color:#f2f2f2;font-weight:400;font-family:'Liberation Sans';">ByLayer</div><div class="t" style="left:1260px;top:111.34px;font-size:12px;color:#f2f2f2;font-weight:400;font-family:'Liberation Sans';">ByLayer</div><div class="t" style="left:1375.5px;top:96.84px;font-size:12px;color:#f2f2f2;font-weight:400;font-family:'Liberation Sans';">Group</div><div class="t" style="left:1452px;top:96.84px;font-size:12px;color:#f2f2f2;font-weight:400;font-family:'Liberation Sans';">Measure</div><div class="t" style="left:1549.5px;top:96.84px;font-size:12px;color:#f2f2f2;font-weight:400;font-family:'Liberation Sans';">Paste</div><div class="t" style="left:1646.5px;top:96.84px;font-size:12px;color:#f2f2f2;font-weight:400;font-family:'Liberation Sans';transform:scaleX(0.92);transform-origin:left">Base</div><svg class="s" style="left:0px;top:0px;" width="400" height="200" viewBox="0 0 400 200"><polygon points="72,154 152,154 142,178 62,178" fill="#3b4453"/><path d="M22,157 L16,174 M242,157 L235,174 M282,157 L275,174" stroke="#5a6170" stroke-width="1"/><path d="M133,163 L140,170 M140,163 L133,170" stroke="#b8bcc4" stroke-width="1.8"/><path d="M252.5,166.5 H264 M258.2,160.5 V172" stroke="#f0f0f0" stroke-width="1.8"/></svg><div class="r" style="left:6px;top:178px;width:1908px;height:4px;background:#3b4453;"></div><div class="t" style="left:31px;top:160.84px;font-size:12px;color:#f2f2f2;font-weight:400;font-family:'Liberation Sans';">Start</div><div class="t" style="left:79px;top:160.84px;font-size:12px;color:#f2f2f2;font-weight:700;font-family:'Liberation Sans';letter-spacing:-0.3px">Sólidos*</div><div class="t" style="left:159px;top:160.84px;font-size:12px;color:#f2f2f2;font-weight:400;font-family:'Liberation Sans';">Drawing1*</div><div class="r" style="left:3px;top:182px;width:1914px;height:783px;background:#212830;"></div><div class="r" style="left:333px;top:182px;width:5px;height:783px;background:#3c3c3d;"></div><div class="r" style="left:333px;top:182px;width:1px;height:783px;background:#4a4a4b;"></div><div class="r" style="left:337px;top:182px;width:1px;height:783px;background:#323233;"></div><div class="r" style="left:6px;top:441px;width:327px;height:5px;background:#3c3c3d;"></div><div class="r" style="left:6px;top:441px;width:327px;height:1px;background:#4a4a4b;"></div><div class="r" style="left:6px;top:445px;width:327px;height:1px;background:#323233;"></div><div class="r" style="left:6px;top:703px;width:327px;height:5px;background:#3c3c3d;"></div><div class="r" style="left:6px;top:703px;width:327px;height:1px;background:#4a4a4b;"></div><div class="r" style="left:6px;top:707px;width:327px;height:1px;background:#323233;"></div><div class="r" style="left:339px;top:183px;width:1573px;height:780px;background:#0f4a90;"></div><div class="r" style="left:340px;top:184px;width:1571px;height:778px;background:#0a74e8;"></div><div class="r" style="left:342px;top:186px;width:1567px;height:774px;background:#212830;"></div><div class="t" style="left:343px;top:189.84px;font-size:12px;color:#f0f0f0;font-weight:400;font-family:'Liberation Sans';letter-spacing:-0.1px">[+][Custom View][X-Ray]</div><svg class="s" style="left:0px;top:0px;" width="1" height="1" viewBox="0 0 1 1"><rect x="1854" y="196" width="10" height="3" fill="#e8e8e8"/><rect x="1877.5" y="191.5" width="6" height="6" fill="none" stroke="#e0e0e0" stroke-width="1.2"/><rect x="1875" y="194" width="7" height="7" fill="#212830" stroke="#e8e8e8" stroke-width="1.6"/><path d="M1894,192 L1903,200 M1903,192 L1894,200" stroke="#f0f0f0" stroke-width="2"/></svg><svg class="s" style="left:0px;top:0px;" width="1" height="1" viewBox="0 0 1 1"><line x1="160.6" y1="237.2" x2="260" y2="294.8" stroke="#d4d4d4" stroke-width="1.8"/><line x1="260" y1="294.8" x2="201.6" y2="393.8" stroke="#d4d4d4" stroke-width="1.8"/><line x1="201.6" y1="393.8" x2="103.1" y2="336.3" stroke="#d4d4d4" stroke-width="1.8"/><line x1="103.1" y1="336.3" x2="160.6" y2="237.2" stroke="#d4d4d4" stroke-width="1.8"/><line x1="160.6" y1="237.2" x2="201.6" y2="393.8" stroke="#d4d4d4" stroke-width="1"/><line x1="103.1" y1="336.3" x2="260" y2="294.8" stroke="#d4d4d4" stroke-width="1"/><line x1="210.9" y1="482.2" x2="113.7" y2="575.7" stroke="#d4d4d4" stroke-width="1.8"/><line x1="210.9" y1="482.2" x2="307.1" y2="575.7" stroke="#d4d4d4" stroke-width="1.8"/><line x1="113.7" y1="575.7" x2="210.9" y2="669" stroke="#d4d4d4" stroke-width="1.8"/><line x1="307.1" y1="575.7" x2="210.9" y2="669" stroke="#d4d4d4" stroke-width="1.8"/><line x1="210.9" y1="482.2" x2="210.9" y2="669" stroke="#d4d4d4" stroke-width="1.3"/><line x1="113.7" y1="575.7" x2="210.9" y2="600.5" stroke="#d4d4d4" stroke-width="1"/><line x1="210.9" y1="600.5" x2="307.1" y2="575.7" stroke="#d4d4d4" stroke-width="1"/><line x1="158.1" y1="777.1" x2="57.5" y2="831.7" stroke="#d4d4d4" stroke-width="1.8"/><line x1="57.5" y1="831.7" x2="123.9" y2="922.6" stroke="#d4d4d4" stroke-width="1.8"/><line x1="123.9" y1="922.6" x2="158.7" y2="932.6" stroke="#d4d4d4" stroke-width="1.8"/><line x1="158.7" y1="932.6" x2="260.4" y2="878.1" stroke="#d4d4d4" stroke-width="1.8"/><line x1="260.4" y1="878.1" x2="193.7" y2="785.6" stroke="#d4d4d4" stroke-width="1.8"/><line x1="193.7" y1="785.6" x2="158.1" y2="777.1" stroke="#d4d4d4" stroke-width="1.8"/><line x1="158.1" y1="777.1" x2="123.9" y2="922.6" stroke="#d4d4d4" stroke-width="1"/><line x1="158.1" y1="777.1" x2="260.4" y2="878.1" stroke="#d4d4d4" stroke-width="1"/><line x1="123.9" y1="922.6" x2="260.4" y2="878.1" stroke="#d4d4d4" stroke-width="1"/><circle cx="303" cy="211" r="22.5" fill="none" stroke="#2f353e" stroke-width="5.5"/><rect x="293" y="201" width="20" height="20" rx="1.5" fill="#595c62"/><rect x="274.5" y="242.5" width="56" height="17.5" rx="3.5" fill="#52565e"/><rect x="293" y="465" width="20" height="20" rx="1.5" fill="#595c62"/><path d="M313.5,452 V468 M313.5,478 V494" stroke="#4a4e55" stroke-width="1"/><rect x="274.5" y="506.5" width="56" height="17.5" rx="3.5" fill="#52565e"/><ellipse cx="303" cy="745.5" rx="19.5" ry="13.2" fill="none" stroke="#30363f" stroke-width="5"/><rect x="293" y="723" width="19.5" height="25.5" rx="1" fill="#5a5d63"/><path d="M293,735.5 H312.5" stroke="#4a4d53" stroke-width="1" stroke-dasharray="2,1"/><g fill="#585d64" font-family="Liberation Sans" font-size="9" font-weight="700"><text x="279" y="754" transform="rotate(-30 283 750)">W</text><text x="308" y="762" transform="rotate(40 312 758)">B</text><text x="316" y="741" transform="rotate(-60 320 737)">E</text></g><rect x="274.5" y="767" width="56" height="17.5" rx="3.5" fill="#52565e"/><g fill="#585d64" font-family="Liberation Sans" font-size="10" font-weight="700"><text x="278" y="204" transform="rotate(-40 283 199)">W</text><text x="310" y="196" transform="rotate(40 315.5 191)">S</text><text x="317" y="230" transform="rotate(-60 321.5 225)">E</text><text x="284" y="237" transform="rotate(40 289 232)">N</text></g><text x="296" y="214" font-family="Liberation Sans" font-size="5" font-weight="700" fill="#6a6d73" transform="rotate(180 303 212)">FRONT</text><path d="M12,443.5 H18 M15,440.5 V446.5 M25.5,441 V446" stroke="#9a9a9a" stroke-width="1"/><path d="M12,705.5 H18 M15,702.5 V708.5 M25.5,703 V708" stroke="#9a9a9a" stroke-width="1"/><path d="M163,442.5 H176 M163,444.5 H176 M163,704.5 H176 M163,706.5 H176" stroke="#707070" stroke-width="0.8"/><path d="M333.5,192.5 H338 M335.5,190 V195" stroke="#8c8c8c" stroke-width="1"/><path d="M333,203.5 H338" stroke="#555" stroke-width="1"/><path d="M335,306 V318 M337,306 V318 M335,568 V580 M337,568 V580 M335,830 V842 M337,830 V842" stroke="#707070" stroke-width="0.8"/><path d="M334,955.5 H338 M336,953.5 V957.5" stroke="#9a9a9a" stroke-width="1"/></svg><div class="r" style="left:34px;top:270px;width:19px;height:531px;background:#2e3440;border-radius:2px"></div><svg class="s" style="left:0px;top:0px;" width="1" height="1" viewBox="0 0 1 1"><path d="M40.5,276.5 L47.5,283.5 M47.5,276.5 L40.5,283.5" stroke="#d4d4d4" stroke-width="1.8"/><path d="M40.5,294 V304 M40.5,296 H43 M40.5,302 H43 M42,299 H47 M45,296.5 L47.5,299 L45,301.5" stroke="#d4d4d4" stroke-width="1.2" fill="none"/><circle cx="44" cy="318" r="3.2" fill="none" stroke="#d4d4d4" stroke-width="1.6"/><path d="M44,312.5 V314.5 M44,321.5 V323.5 M38.5,318 H40.5 M47.5,318 H49.5 M40,314 L41.5,315.5 M48,322 L46.5,320.5 M48,314 L46.5,315.5 M40,322 L41.5,320.5" stroke="#d4d4d4" stroke-width="1.6"/><polygon points="40,784 48,784 45,788 37,788" fill="#dcdcdc"/><path d="M37,790 H44 M37,793 H44" stroke="#dcdcdc" stroke-width="1.5"/><rect x="43" y="787" width="9" height="12" fill="#f0f0f0"/><rect x="44.5" y="789" width="6" height="4" fill="#5fbdf5"/><path d="M45,796 H50" stroke="#444" stroke-width="1"/></svg><div class="t" style="left:45px;top:694px;font-size:13px;color:#c9ccd2;font-family:'Liberation Sans';transform:translate(-50%,-50%) rotate(-90deg) scaleX(0.81);transform-origin:center">LAYER PROPERTIES MANAGER</div><div class="t" style="left:279px;top:244.69px;font-size:11px;color:#6a6e75;font-weight:400;font-family:'Liberation Sans';">Unna...</div><svg class="s" style="left:0px;top:0px;" width="1" height="1" viewBox="0 0 1 1"><polygon points="317.5,249 323.5,249 320.5,252" fill="#5a5e65"/></svg><div class="t" style="left:279px;top:508.69px;font-size:11px;color:#6a6e75;font-weight:400;font-family:'Liberation Sans';">Unna...</div><svg class="s" style="left:0px;top:0px;" width="1" height="1" viewBox="0 0 1 1"><polygon points="317.5,513 323.5,513 320.5,516" fill="#5a5e65"/></svg><div class="t" style="left:279px;top:769.69px;font-size:11px;color:#6a6e75;font-weight:400;font-family:'Liberation Sans';">Unna...</div><svg class="s" style="left:0px;top:0px;" width="1" height="1" viewBox="0 0 1 1"><polygon points="317.5,774 323.5,774 320.5,777" fill="#5a5e65"/></svg><svg class="s" style="left:0px;top:0px;" width="1" height="1" viewBox="0 0 1 1"><defs><clipPath id="cF2"><polygon points="1048.3,413.75 1202.5,555.4 1196.7,670"/></clipPath><clipPath id="cF3"><polygon points="1048.3,413.75 1196.7,670 893.3,667.5"/></clipPath><clipPath id="cF4"><polygon points="1048.3,413.75 893.3,667.5 900.4,554.2"/></clipPath><clipPath id="cG1"><polygon points="1048.3,809.6 1196.7,670 893.3,667.5"/></clipPath></defs><g clip-path="url(#cF2)"><polygon points="1048.3,413.75 900.4,554.2 1202.5,555.4" fill="rgb(66,68,71)" stroke="rgb(66,68,71)" stroke-width="0.6"/></g><g clip-path="url(#cF2)"><polygon points="1048.3,809.6 893.3,667.5 900.4,554.2" fill="rgb(78,80,83)" stroke="rgb(78,80,83)" stroke-width="0.6"/></g><g clip-path="url(#cF2)"><polygon points="1048.3,809.6 900.4,554.2 1202.5,555.4" fill="rgb(81,83,86)" stroke="rgb(81,83,86)" stroke-width="0.6"/></g><g clip-path="url(#cF2)"><polygon points="1048.3,809.6 1202.5,555.4 1196.7,670" fill="rgb(84,86,89)" stroke="rgb(84,86,89)" stroke-width="0.6"/></g><g clip-path="url(#cF3)"><polygon points="1048.3,413.75 900.4,554.2 1202.5,555.4" fill="rgb(95,97,100)" stroke="rgb(95,97,100)" stroke-width="0.6"/></g><g clip-path="url(#cF3)"><polygon points="1048.3,809.6 893.3,667.5 900.4,554.2" fill="rgb(94,96,99)" stroke="rgb(94,96,99)" stroke-width="0.6"/></g><g clip-path="url(#cF3)"><polygon points="1048.3,809.6 900.4,554.2 1202.5,555.4" fill="rgb(108,110,113)" stroke="rgb(108,110,113)" stroke-width="0.6"/></g><g clip-path="url(#cF3)"><polygon points="1048.3,809.6 1202.5,555.4 1196.7,670" fill="rgb(106,108,111)" stroke="rgb(106,108,111)" stroke-width="0.6"/></g><g clip-path="url(#cF4)"><polygon points="1048.3,413.75 900.4,554.2 1202.5,555.4" fill="rgb(80,82,85)" stroke="rgb(80,82,85)" stroke-width="0.6"/></g><g clip-path="url(#cF4)"><polygon points="1048.3,809.6 893.3,667.5 900.4,554.2" fill="rgb(93,95,98)" stroke="rgb(93,95,98)" stroke-width="0.6"/></g><g clip-path="url(#cF4)"><polygon points="1048.3,809.6 900.4,554.2 1202.5,555.4" fill="rgb(104,106,109)" stroke="rgb(104,106,109)" stroke-width="0.6"/></g><g clip-path="url(#cF4)"><polygon points="1048.3,809.6 1202.5,555.4 1196.7,670" fill="rgb(88,90,93)" stroke="rgb(88,90,93)" stroke-width="0.6"/></g><g clip-path="url(#cG1)"><polygon points="1048.3,413.75 900.4,554.2 1202.5,555.4" fill="rgb(78,80,83)" stroke="rgb(78,80,83)" stroke-width="0.6"/></g><g clip-path="url(#cG1)"><polygon points="1048.3,809.6 893.3,667.5 900.4,554.2" fill="rgb(65,67,70)" stroke="rgb(65,67,70)" stroke-width="0.6"/></g><g clip-path="url(#cG1)"><polygon points="1048.3,809.6 900.4,554.2 1202.5,555.4" fill="rgb(93,95,98)" stroke="rgb(93,95,98)" stroke-width="0.6"/></g><g clip-path="url(#cG1)"><polygon points="1048.3,809.6 1202.5,555.4 1196.7,670" fill="rgb(94,96,99)" stroke="rgb(94,96,99)" stroke-width="0.6"/></g><line x1="1048.3" y1="413.75" x2="900.4" y2="554.2" stroke="#ececec" stroke-width="1.1"/><line x1="1048.3" y1="413.75" x2="1202.5" y2="555.4" stroke="#ececec" stroke-width="1.1"/><line x1="900.4" y1="554.2" x2="1202.5" y2="555.4" stroke="#ececec" stroke-width="1.1"/><line x1="900.4" y1="554.2" x2="893.3" y2="667.5" stroke="#ececec" stroke-width="1.1"/><line x1="1202.5" y1="555.4" x2="1196.7" y2="670" stroke="#ececec" stroke-width="1.1"/><line x1="893.3" y1="667.5" x2="1196.7" y2="670" stroke="#ececec" stroke-width="1.1"/><line x1="893.3" y1="667.5" x2="1048.3" y2="809.6" stroke="#ececec" stroke-width="1.1"/><line x1="1196.7" y1="670" x2="1048.3" y2="809.6" stroke="#ececec" stroke-width="1.1"/><line x1="1048.3" y1="413.75" x2="893.3" y2="667.5" stroke="#e4e4e4" stroke-width="1"/><line x1="1048.3" y1="413.75" x2="1196.7" y2="670" stroke="#e4e4e4" stroke-width="1"/><line x1="1048.3" y1="809.6" x2="900.4" y2="554.2" stroke="#cfcfcf" stroke-width="0.9"/><line x1="1048.3" y1="809.6" x2="1202.5" y2="555.4" stroke="#cfcfcf" stroke-width="0.9"/><rect x="897" y="506" width="5" height="46" rx="1.5" fill="#4a8a4a"/><rect x="898" y="507" width="1.5" height="44" fill="#6aaa6a"/><path d="M894,495 L899,500 L904,495 M899,500 V504" stroke="#38b838" stroke-width="1" fill="none"/><rect x="902" y="549" width="46" height="5" rx="1.5" fill="#b05858"/><rect x="903" y="550" width="44" height="1.5" fill="#d07878"/><path d="M944,538 L955,549 M955,538 L944,549" stroke="#e03030" stroke-width="1"/><rect x="896" y="550" width="7" height="21" rx="2" fill="#3a78d8"/><path d="M900,561 L908,552 M900,572 L910,572" stroke="#3a78d8" stroke-width="1.2"/><line x1="1140.5" y1="596" x2="1140.5" y2="694" stroke="#6ad86a" stroke-width="1"/><line x1="1105" y1="660.5" x2="1212" y2="660.5" stroke="#e06060" stroke-width="1"/><line x1="1140.5" y1="648" x2="1140.5" y2="683" stroke="#7a7ae0" stroke-width="1"/><rect x="1137.5" y="657.5" width="6" height="6" fill="#6f7275" stroke="#f0f0f0" stroke-width="1"/><rect x="1150.5" y="647.5" width="6.5" height="6.5" fill="#e8e8e8" stroke="#151515" stroke-width="1"/><rect x="1147.5" y="644.5" width="6.5" height="6.5" fill="#ffffff" stroke="#151515" stroke-width="1"/><path d="M1767,317.5 A65,28.3 0 1 0 1897,317.5 A65,28.3 0 1 0 1767,317.5 Z M1781.6,318.5 A50.4,18.3 0 1 0 1882.4,318.5 A50.4,18.3 0 1 0 1781.6,318.5 Z" fill="#4a4f57" fill-rule="evenodd"/><polygon points="1809,257 1856,257 1857,272 1806,272" fill="#9c9ea1"/><rect x="1806" y="272" width="51" height="48" fill="#aaacaf"/><path d="M1806,272.5 H1857" stroke="#6a6c70" stroke-width="1" stroke-dasharray="5,3"/><rect x="1815" y="282" width="33" height="29" fill="#9fa4a9"/><g font-family="Liberation Sans" font-weight="700" fill="#b8babe" text-anchor="middle"><g transform="translate(1772,311) rotate(-90) scale(1,1.55)"><text x="0" y="4.3" font-size="12">S</text></g><g transform="translate(1891.5,311.5) rotate(90) scale(1,1.55)"><text x="0" y="4.3" font-size="12">N</text></g><g transform="translate(1831.5,343) rotate(-90) scale(1,1.5)"><text x="0" y="4.3" font-size="12">E</text></g></g><text x="1820" y="263" font-family="Liberation Sans" font-size="6" font-weight="700" fill="#505357" transform="rotate(180 1832 261)">BACK</text><rect x="1798.5" y="374.5" width="67" height="16.5" rx="4" fill="#8a8e97" stroke="#a2a6ae" stroke-width="1"/><polygon points="1852.5,381 1859.5,381 1856,386" fill="none" stroke="#b0b4bb" stroke-width="1"/><rect x="1879" y="417.5" width="31" height="212" rx="3" fill="#5b5e63"/><circle cx="1904" cy="422" r="2.2" fill="none" stroke="#46494e" stroke-width="1"/><path d="M1885,447 A10,10 0 1 1 1905,447 V455 A10,10 0 0 1 1885,447 Z" fill="none" stroke="#46494e" stroke-width="1.3"/><circle cx="1895" cy="445" r="5" fill="none" stroke="#46494e" stroke-width="1.3"/><polygon points="1892,466 1898,466 1895,469" fill="#46494e"/><rect x="1880" y="473" width="28" height="1" fill="#52555a"/><path d="M1886,490 L1890,497 H1900 L1905,488 V481 M1889,491 V478 M1893,489 V475 M1897,489 V476 M1901,489 V479" stroke="#46494e" stroke-width="1.5" fill="none"/><path d="M1884,505 L1897,518 M1897,505 L1884,518 M1884,505 H1888 M1884,505 V509 M1897,505 H1893 M1897,505 V509 M1884,518 V514 M1884,518 H1888" stroke="#46494e" stroke-width="1.2" fill="none"/><circle cx="1899" cy="521" r="4" fill="none" stroke="#46494e" stroke-width="1.3"/><line x1="1902" y1="524" x2="1906" y2="528" stroke="#46494e" stroke-width="1.8"/><polygon points="1892,536 1898,536 1895,539" fill="#46494e"/><ellipse cx="1895" cy="557" rx="10" ry="4" fill="none" stroke="#46494e" stroke-width="1.2"/><path d="M1893,565 V549 L1895,545 L1897,549 V565 Z" fill="none" stroke="#46494e" stroke-width="1.2"/><polygon points="1892,574 1898,574 1895,577" fill="#46494e"/><rect x="1880" y="581" width="28" height="1" fill="#52555a"/><rect x="1884" y="588" width="5" height="4.5" fill="none" stroke="#46494e" stroke-width="1"/><rect x="1892" y="588" width="5" height="4.5" fill="none" stroke="#46494e" stroke-width="1"/><rect x="1900" y="588" width="5" height="4.5" fill="none" stroke="#46494e" stroke-width="1"/><rect x="1884" y="595" width="16" height="13" fill="none" stroke="#46494e" stroke-width="1"/><polygon points="1889,598 1896,601.5 1889,605" fill="#46494e"/><circle cx="1904" cy="625" r="2.2" fill="none" stroke="#46494e" stroke-width="1"/></svg><div class="t" style="left:1821px;top:290.69px;font-size:11px;color:#474a50;font-weight:700;font-family:'Liberation Sans';transform:scaleX(0.9);transform-origin:left">TOP</div><div class="t" style="left:1802px;top:376.69px;font-size:11px;color:#4a4d55;font-weight:400;font-family:'Liberation Sans';transform:scaleX(0.92);transform-origin:left">Unnamed</div><div class="r" style="left:1909px;top:184px;width:2px;height:778px;background:#0a74e8;"></div><div class="r" style="left:1911px;top:183px;width:1px;height:780px;background:#0f4a90;"></div><div class="r" style="left:6px;top:965px;width:1908px;height:4px;background:#3b4453;"></div><svg class="s" style="left:0px;top:0px;" width="1" height="1" viewBox="0 0 1 1"><polygon points="24,969 83,969 73.5,993 14,993" fill="#3b4453"/><path d="M135.5,973 L128.5,989 M201.5,973 L194.5,989 M241.5,973 L234.5,989" stroke="#5a6170" stroke-width="1"/><path d="M212,981.5 H224 M218,975 V987.5" stroke="#f0f0f0" stroke-width="1.8"/><rect x="8" y="999" width="1334" height="24" fill="#3b4453"/><rect x="1346" y="999" width="47" height="24" fill="#3b4453"/><rect x="1396" y="999" width="64" height="24" fill="#3b4453"/><rect x="1464" y="999" width="103" height="24" fill="#3b4453"/><rect x="1569" y="999" width="63" height="24" fill="#3b4453"/><rect x="1636" y="999" width="105" height="24" fill="#3b4453"/><rect x="1744" y="999" width="40" height="24" fill="#3b4453"/><rect x="1785" y="999" width="24" height="24" fill="#3b4453"/><rect x="1812" y="999" width="24" height="24" fill="#3b4453"/><rect x="1839" y="999" width="22" height="24" fill="#3b4453"/><rect x="1864" y="999" width="48" height="24" fill="#3b4453"/><rect x="1464" y="1000" width="22" height="22" fill="#5a8ac0"/><rect x="1569" y="1000" width="22" height="22" fill="#5a8ac0"/><rect x="1593" y="1000" width="22" height="22" fill="#5a8ac0"/><rect x="1636" y="1000" width="22" height="22" fill="#5a8ac0"/><path d="M1402.5,1003 V1018 M1407.5,1003 V1018 M1412.5,1003 V1018 M1400,1005.5 H1415 M1400,1010.5 H1415 M1400,1015.5 H1415" stroke="#e0e0e0" stroke-width="1"/><rect x="1426" y="1004" width="2" height="2" fill="#e0e0e0"/><rect x="1426" y="1009" width="2" height="2" fill="#e0e0e0"/><rect x="1426" y="1014" width="2" height="2" fill="#e0e0e0"/><rect x="1431" y="1004" width="2" height="2" fill="#e0e0e0"/><rect x="1431" y="1009" width="2" height="2" fill="#e0e0e0"/><rect x="1431" y="1014" width="2" height="2" fill="#e0e0e0"/><rect x="1436" y="1004" width="2" height="2" fill="#e0e0e0"/><rect x="1436" y="1009" width="2" height="2" fill="#e0e0e0"/><rect x="1436" y="1014" width="2" height="2" fill="#e0e0e0"/><polygon points="1448.5,1009 1455.5,1009 1452,1013" fill="#e0e0e0"/><polygon points="1515.0,1009 1522.0,1009 1518.5,1013" fill="#e0e0e0"/><polygon points="1555.0,1009 1562.0,1009 1558.5,1013" fill="#e0e0e0"/><polygon points="1620.0,1009 1627.0,1009 1623.5,1013" fill="#e0e0e0"/><polygon points="1729.5,1009 1736.5,1009 1733,1013" fill="#e0e0e0"/><polygon points="1770.5,1009 1777.5,1009 1774,1013" fill="#e0e0e0"/><path d="M1467.5,1003 V1018.5 H1483 M1467.5,1013.5 H1472.5 V1018.5" fill="none" stroke="#e0e0e0" stroke-width="1.2"/><circle cx="1497" cy="1012" r="6" fill="none" stroke="#e0e0e0" stroke-width="1.2"/><path d="M1497,1011.5 H1507.5 M1494,1015 L1503,1004" stroke="#e0e0e0" stroke-width="1.2"/><path d="M1532,1004 L1545,1018" stroke="#e05050" stroke-width="1.2"/><path d="M1538.5,1003 V1019" stroke="#4cc060" stroke-width="1.2"/><rect x="1536.5" y="1009" width="4" height="4" fill="#3b4453" stroke="#e8e8e8" stroke-width="1"/><path d="M1572,1017.5 H1587 M1572,1017.5 L1586,1005" stroke="#e0e0e0" stroke-width="1.4"/><rect x="1578" y="1010" width="3" height="3" fill="#e0e0e0"/><rect x="1598.5" y="1006.5" width="12" height="11.5" fill="none" stroke="#e0e0e0" stroke-width="1.4"/><rect x="1596.5" y="1003.5" width="3.5" height="3.5" fill="#5a8ac0" stroke="#e0e0e0" stroke-width="1"/><path d="M1646,1003 L1640,1018 L1646,1014 L1652,1018 Z" fill="#e0e0e0"/><circle cx="1652" cy="1007" r="2.5" fill="none" stroke="#e0e0e0" stroke-width="1"/><path d="M1670,1003 L1664,1018 L1670,1014 L1676,1018 Z" fill="#e0e0e0"/><path d="M1676,1003 L1673,1007 H1676 L1673,1011" stroke="#e0e0e0" stroke-width="1" fill="none"/><path d="M1695,1003 L1689,1018 L1695,1014 L1701,1018 Z" fill="#e0e0e0"/><polygon points="1762.50,1010.50 1760.08,1012.60 1760.30,1015.80 1757.10,1015.58 1755.00,1018.00 1752.90,1015.58 1749.70,1015.80 1749.92,1012.60 1747.50,1010.50 1749.92,1008.40 1749.70,1005.20 1752.90,1005.42 1755.00,1003.00 1757.10,1005.42 1760.30,1005.20 1760.08,1008.40" fill="#e0e0e0"/><circle cx="1755" cy="1010.5" r="2.6" fill="#3b4453"/><path d="M1789,1011 H1805 M1797,1003 V1019" stroke="#e0e0e0" stroke-width="1.8"/><rect x="1816.5" y="1003.5" width="5.5" height="5.5" fill="none" stroke="#e0e0e0" stroke-width="1"/><circle cx="1828" cy="1010" r="3" fill="none" stroke="#e0e0e0" stroke-width="1"/><polygon points="1819,1013 1822,1018.5 1816,1018.5" fill="none" stroke="#e0e0e0" stroke-width="1"/><path d="M1841.5,1003 H1853 L1856,1006 V1013 H1841.5 Z" fill="#3a6fb5"/><path d="M1842,1006 H1849 M1844,1003.5 V1012" stroke="#f0f0f0" stroke-width="1"/><rect x="1841.5" y="1012.5" width="7" height="4.5" fill="#f2b827"/><path d="M1848,1016 L1851,1019 L1857,1013" stroke="#4cc060" stroke-width="2" fill="none"/><rect x="1868.5" y="1004.5" width="15.5" height="11.5" fill="none" stroke="#e0e0e0" stroke-width="1.2"/><path d="M1871.5,1014 L1875,1010.5 M1871.5,1011 V1014 H1874.5 M1881.5,1006.5 L1878,1010 M1878.5,1006.5 H1881.5 V1009.5" stroke="#e0e0e0" stroke-width="1.1" fill="none"/><path d="M1892,1004 H1908 M1892,1010.5 H1908 M1892,1017 H1908" stroke="#e0e0e0" stroke-width="1.8"/></svg><div class="t" style="left:31.5px;top:975.84px;font-size:12px;color:#f2f2f2;font-weight:700;font-family:'Liberation Sans';">Model</div><div class="t" style="left:90px;top:975.84px;font-size:12px;color:#f2f2f2;font-weight:400;font-family:'Liberation Sans';">AAA3</div><div class="t" style="left:144.5px;top:975.84px;font-size:12px;color:#f2f2f2;font-weight:400;font-family:'Liberation Sans';">Layout2</div><div class="t" style="left:1349.5px;top:1004.50px;font-size:13px;color:#f2f2f2;font-weight:400;font-family:'Liberation Sans';transform:scaleX(0.92);transform-origin:left">MODEL</div><div class="t" style="left:1712px;top:1004.42px;font-size:12.5px;color:#f2f2f2;font-weight:700;font-family:'Liberation Sans';transform:scaleX(0.78);transform-origin:left">1:1</div><svg class="s" style="left:0px;top:0px;" width="1" height="1" viewBox="0 0 1 1"><rect x="400" y="909" width="25" height="93" fill="#2a303a" opacity="0.95"/><rect x="400" y="960" width="25" height="2" fill="#1d4a80"/><rect x="400" y="965" width="25" height="4" fill="#343a46"/><rect x="404" y="914" width="2" height="2" fill="#d8d8d8"/><rect x="404" y="917" width="2" height="2" fill="#d8d8d8"/><rect x="407" y="914" width="2" height="2" fill="#d8d8d8"/><rect x="407" y="917" width="2" height="2" fill="#d8d8d8"/><rect x="410" y="914" width="2" height="2" fill="#d8d8d8"/><rect x="410" y="917" width="2" height="2" fill="#d8d8d8"/><rect x="413" y="914" width="2" height="2" fill="#d8d8d8"/><rect x="413" y="917" width="2" height="2" fill="#d8d8d8"/><rect x="416" y="914" width="2" height="2" fill="#d8d8d8"/><rect x="416" y="917" width="2" height="2" fill="#d8d8d8"/><rect x="419" y="914" width="2" height="2" fill="#d8d8d8"/><rect x="419" y="917" width="2" height="2" fill="#d8d8d8"/><path d="M408,928 L415,935 M415,928 L408,935" stroke="#c8c8c8" stroke-width="1.8"/><path d="M404.5,963.5 L412,956" stroke="#b8b8b8" stroke-width="2.4" stroke-linecap="round"/><path d="M410.5,950.5 A4.5,4.5 0 0 0 414.5,958.5 A4.5,4.5 0 0 0 418,953 L415.5,955 L413,953 L414.5,950 A4.5,4.5 0 0 0 410.5,950.5 Z" fill="#b8b8b8"/><rect x="425" y="910" width="1088" height="71" fill="#98999c"/><rect x="425" y="959" width="1088" height="1" fill="#8fa2b8"/><rect x="425" y="960" width="1088" height="2" fill="#8fb2dc"/><rect x="425" y="962" width="1088" height="1" fill="#959ba4"/><rect x="425" y="965" width="1088" height="4" fill="#a1a3a8"/><rect x="425" y="981" width="1088" height="1" fill="#3a3a3a"/><rect x="425" y="982" width="1088" height="20" fill="#c1c2c5"/><rect x="425" y="1000" width="1088" height="1" fill="#cacbce"/><rect x="425" y="1002" width="1088" height="1" fill="#262a31"/><rect x="429.5" y="986.5" width="15" height="11" fill="none" stroke="#555" stroke-width="1"/><rect x="430" y="987" width="14" height="2" fill="#555"/><path d="M431.5,991 L433.5,992.5 L431.5,994 M434,995.5 H437" stroke="#555" stroke-width="0.8" fill="none"/><polygon points="448,990 455,990 451.5,994" fill="#555"/><polygon points="1501.5,995 1509.5,995 1505.5,990.5" fill="#555"/></svg><div class="t" style="left:427px;top:922.57px;font-size:12.3px;color:#151515;font-weight:400;font-family:'Liberation Mono';transform:scaleX(0.9485);transform-origin:left">Erase source objects? [Yes/No] &lt;No&gt;: no</div><div class="t" style="left:427px;top:937.57px;font-size:12.3px;color:#151515;font-weight:400;font-family:'Liberation Mono';transform:scaleX(0.9485);transform-origin:left">Command:</div><div class="t" style="left:427px;top:952.57px;font-size:12.3px;color:#151515;font-weight:400;font-family:'Liberation Mono';transform:scaleX(0.9485);transform-origin:left">Command:</div><div class="t" style="left:427px;top:967.57px;font-size:12.3px;color:#151515;font-weight:400;font-family:'Liberation Mono';transform:scaleX(0.9485);transform-origin:left">Command:</div><div class="t" style="left:461px;top:987.57px;font-size:12.3px;color:#6e6e6e;font-weight:400;font-family:'Liberation Mono';font-style:italic;transform:scaleX(0.9485);transform-origin:left">Type a command</div>
</body></html>
